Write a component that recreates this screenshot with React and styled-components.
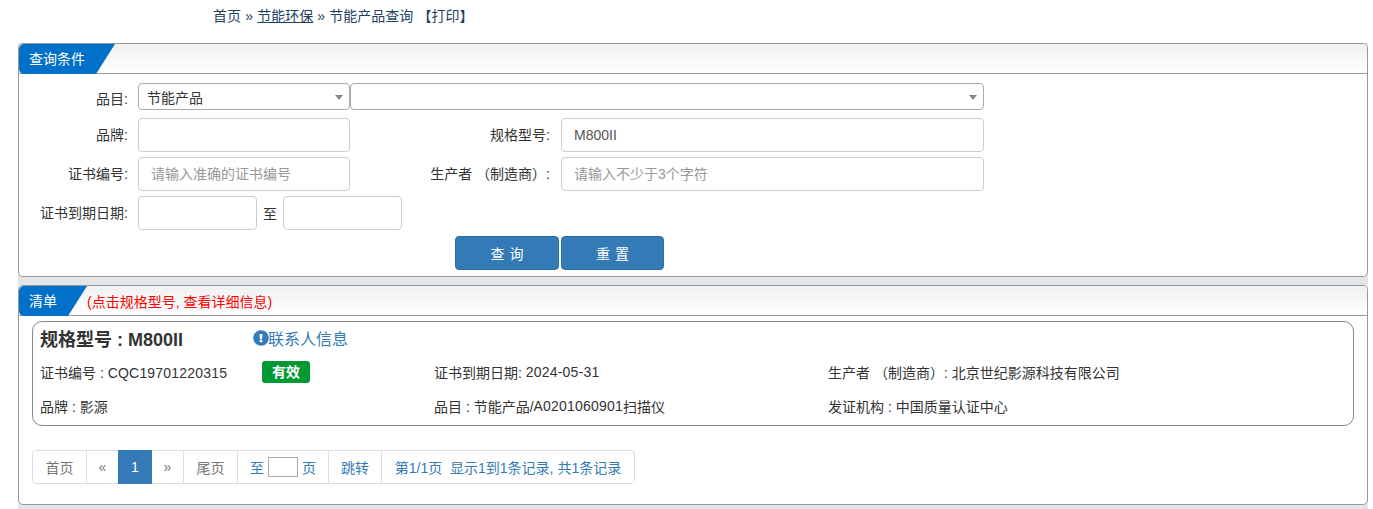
import styled, { createGlobalStyle } from 'styled-components'
import { FaExclamationCircle } from 'react-icons/fa'

export default function App () {
  return (
    <>
      <GlobalStyle />
      <Crumbs>
        首页 » <CrumbLink href="#">节能环保</CrumbLink> » 节能产品查询 【打印】
      </Crumbs>
      <Page>
        <Panel>
          <PanelHead>
            <Tab>查询条件</Tab>
          </PanelHead>
          <QueryForm>
            <SelectRow>
              <Label>品目:</Label>
              <Select $width={212}>
                节能产品
                <Arrow />
              </Select>
              <Select $width={634}>
                <Arrow />
              </Select>
            </SelectRow>
            <Row>
              <Label>品牌:</Label>
              <Input />
              <SecondLabel>规格型号:</SecondLabel>
              <Input $width={423} defaultValue="M800II" />
            </Row>
            <Row>
              <Label>证书编号:</Label>
              <Input placeholder="请输入准确的证书编号" />
              <SecondLabel>生产者 （制造商）:</SecondLabel>
              <Input $width={423} placeholder="请输入不少于3个字符" />
            </Row>
            <Row>
              <Label>证书到期日期:</Label>
              <Input $width={119} />
              <To>至</To>
              <Input $width={119} />
            </Row>
            <Actions>
              <Button type="button" $width={104}>查 询</Button>
              <Button type="button" $width={103}>重 置</Button>
            </Actions>
          </QueryForm>
        </Panel>

        <Panel>
          <PanelHead>
            <Tab>清单</Tab>
            <Hint>(点击规格型号, 查看详细信息)</Hint>
          </PanelHead>
          <ListBody>
            <Card>
              <CardTitle>
                <Model>规格型号 : M800II</Model>
                <Contact href="#">
                  <FaExclamationCircle size={16} />
                  联系人信息
                </Contact>
              </CardTitle>
              <InfoGrid>
                <InfoCell>
                  <CertNo>证书编号 : <Num>CQC19701220315</Num></CertNo>
                  <Badge>有效</Badge>
                </InfoCell>
                <InfoCell>证书到期日期: <Num>2024-05-31</Num></InfoCell>
                <InfoCell>生产者 （制造商）: 北京世纪影源科技有限公司</InfoCell>
                <InfoCell>品牌 : 影源</InfoCell>
                <InfoCell>品目 : 节能产品/<Num>A0201060901</Num>扫描仪</InfoCell>
                <InfoCell>发证机构 : 中国质量认证中心</InfoCell>
              </InfoGrid>
            </Card>
            <Pager>
              <PageItem $width={55} $muted>首页</PageItem>
              <PageItem $width={33} $muted>«</PageItem>
              <PageItem $width={34} $active>1</PageItem>
              <PageItem $width={33} $muted>»</PageItem>
              <PageItem $width={55} $muted>尾页</PageItem>
              <PageItem $width={92}>
                至
                <PageInput />
                页
              </PageItem>
              <PageItem $width={54}>跳转</PageItem>
              <PageItem $width={254}>第1/1页&nbsp;&nbsp;显示1到1条记录, 共1条记录</PageItem>
            </Pager>
          </ListBody>
        </Panel>
      </Page>
    </>
  )
}

const GlobalStyle = createGlobalStyle`
  html, body {
    margin: 0;
    padding: 0;
    background: #fff;
    overflow: hidden;
  }
  body {
    font-family: "Liberation Sans", "Noto Sans CJK SC", sans-serif;
    font-size: 14px;
    color: #333;
  }
  * {
    box-sizing: border-box;
  }
`

const Crumbs = styled.div`
  height: 43px;
  padding: 8px 0 0 213px;
  line-height: 17px;
  font-size: 14px;
  word-spacing: 0.3px;
  color: #1f3f5f;
`

const CrumbLink = styled.a`
  color: #1f3f5f;
  text-decoration: underline;
`

const Page = styled.div`
  width: 1350px;
  margin-left: 18px;
  padding-bottom: 4px;
  background: #e1e5e9;
`

const Panel = styled.section`
  background: #fff;
  border: 1px solid #999;
  border-radius: 5px;
  margin-bottom: 8px;

  &:last-child {
    margin-bottom: 0;
  }
`

const PanelHead = styled.div`
  display: flex;
  align-items: center;
  height: 30px;
  border-bottom: 1px solid #999;
  border-radius: 4px 4px 0 0;
  background: linear-gradient(#f0f0f0, #fff);
`

const Tab = styled.div`
  height: 30px;
  margin-top: 1px;
  padding: 0 30px 0 10px;
  line-height: 30px;
  color: #fff;
  background: #0070c9;
  border-radius: 5px 0 0 5px;
  clip-path: polygon(0 0, 100% 0, calc(100% - 19px) 100%, 0 100%);
`

const Hint = styled.span`
  margin-top: 1px;
  color: #f00;
`

const QueryForm = styled.div`
  height: 202px;
  padding-top: 9px;
`

const Label = styled.label`
  width: 109px;
  margin: -2px 10px 0 0;
  text-align: right;
  white-space: nowrap;
`

const SecondLabel = styled(Label)`
  width: 200px;
  margin-right: 11px;
`

const Row = styled.div`
  display: flex;
  align-items: center;
  height: 34px;
  margin-bottom: 5px;
`

const SelectRow = styled(Row)`
  height: 27px;
  margin-bottom: 8px;

  ${Label} {
    margin-top: 2px;
  }
`

const Select = styled.div`
  position: relative;
  width: ${p => p.$width}px;
  height: 27px;
  padding-left: 8px;
  line-height: 28px;
  background: #fff;
  border: 1px solid #aaa;
  border-radius: 4px;
`

const Arrow = styled.b`
  position: absolute;
  top: 11px;
  right: 6px;
  border-style: solid;
  border-width: 5px 4px 0;
  border-color: #888 transparent transparent;
`

const Input = styled.input`
  width: ${p => p.$width || 212}px;
  height: 34px;
  padding: 0 12px;
  font: inherit;
  color: #555;
  background: #fff;
  border: 1px solid #ccc;
  border-radius: 4px;
  outline: none;

  &::placeholder {
    color: #999;
    opacity: 1;
  }
`

const To = styled.span`
  width: 26px;
  text-align: center;
`

const Actions = styled.div`
  display: flex;
  justify-content: center;
  gap: 2px;
  width: 1081px;
  margin-top: 6px;
`

const Button = styled.button`
  width: ${p => p.$width}px;
  height: 34px;
  padding: 0;
  font: inherit;
  color: #fff;
  background: #337ab7;
  border: 1px solid #2e6da4;
  border-radius: 4px;
  word-spacing: 1px;
`

const ListBody = styled.div`
  height: 188px;
  padding: 5px 13px 0;
`

const Card = styled.article`
  height: 105px;
  padding: 0 7px;
  border: 1px solid #888;
  border-radius: 10px;
`

const CardTitle = styled.div`
  display: flex;
  align-items: center;
  height: 33px;
  padding-bottom: 2px;
`

const Model = styled.h4`
  width: 213px;
  margin: 0;
  font-size: 18px;
  font-weight: bold;
`

const Contact = styled.a`
  display: flex;
  align-items: center;
  font-size: 16px;
  color: #337ab7;
  text-decoration: none;

  svg {
    margin-right: -1px;
  }
`

const InfoGrid = styled.div`
  display: grid;
  grid-template-columns: repeat(3, 394px);
  grid-auto-rows: 34px;
`

const InfoCell = styled.div`
  display: flex;
  align-items: center;
  white-space: pre;
`

const CertNo = styled.span`
  width: 222px;
`

const Num = styled.span`
  letter-spacing: 0.2px;
`

const Badge = styled.span`
  width: 48px;
  height: 22px;
  line-height: 22px;
  text-align: center;
  font-weight: bold;
  color: #fff;
  background: #009933;
  border-radius: 3px;
`

const Pager = styled.nav`
  display: flex;
  width: fit-content;
  height: 34px;
  margin-top: 24px;
  border-radius: 4px;
`

const PageItem = styled.span`
  position: relative;
  z-index: ${p => (p.$active ? 1 : 0)};
  display: flex;
  align-items: center;
  justify-content: center;
  width: ${p => p.$width}px;
  margin-left: -1px;
  padding-bottom: 1px;
  white-space: pre;
  color: ${p => (p.$active ? '#fff' : p.$muted ? '#777' : '#337ab7')};
  background: ${p => (p.$active ? '#337ab7' : '#fff')};
  border: 1px solid ${p => (p.$active ? '#337ab7' : '#ddd')};

  &:first-child {
    margin-left: 0;
    border-radius: 4px 0 0 4px;
  }
  &:last-child {
    border-radius: 0 4px 4px 0;
  }
`

const PageInput = styled.input`
  width: 30px;
  height: 20px;
  margin: 0 4px;
  background: #fff;
  border: 1px solid #aaa;
  outline: none;
`
